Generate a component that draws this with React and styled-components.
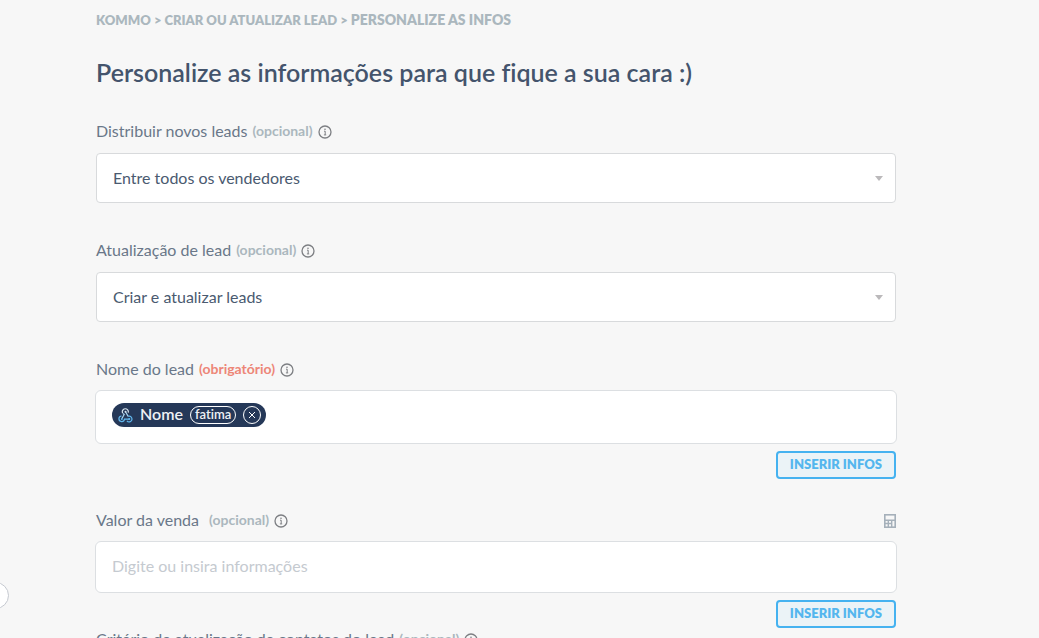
import React from "react";
import styled, { createGlobalStyle, css } from "styled-components";

const GlobalStyle = createGlobalStyle`
  *, *::before, *::after { box-sizing: border-box; }
  body {
    margin: 0;
    background: #f7f7f7;
    color: #42526b;
    font-family: Lato, "Open Sans", sans-serif;
    font-size: 16px;
    font-variant-ligatures: none;
  }
  button, input, select { font: inherit; color: inherit; }
`;

const Page = styled.main`
  position: relative;
  height: 100vh;
  overflow: hidden;
  padding: 10px 96px 0;
`;

const Content = styled.div`
  max-width: 800px;
`;

const Breadcrumb = styled.nav`
  color: #abb7be;
  font-size: 13px;
  font-weight: 800;
  line-height: 20px;
  text-transform: uppercase;
  white-space: nowrap;
`;

const Crumb = styled.a`
  color: inherit;
  text-decoration: none;
  font-size: ${(p) => (p.$current ? 14 : 13)}px;
`;

const Title = styled.h1`
  margin: 28px 0 36px;
  color: #44546c;
  font-size: 25px;
  font-weight: 600;
  line-height: 28px;
  white-space: nowrap;
`;

const Field = styled.section`
  margin-bottom: ${(p) => p.$space}px;
`;

const LabelRow = styled.div`
  display: flex;
  align-items: center;
  height: 20px;
  margin-bottom: 11px;
  white-space: nowrap;
`;

const Label = styled.label`
  padding-bottom: 2px;
  color: #6a7789;
  line-height: 20px;
`;

const Hint = styled.span`
  margin-left: ${(p) => (p.$wide ? 10 : 5)}px;
  padding-bottom: 2px;
  color: ${(p) => (p.$required ? "#ed8677" : "#abb7be")};
  font-size: 14px;
  font-weight: 700;
  line-height: 20px;
`;

const InfoButton = styled.button`
  display: flex;
  margin: 0 0 0 5px;
  padding: 0;
  border: 0;
  background: none;
  color: #7d7f83;
`;

const ToolButton = styled(InfoButton)`
  margin: 0 -1px 0 auto;
  color: #a5b0ba;
`;

const SelectBox = styled.div`
  position: relative;

  &::after {
    content: "";
    position: absolute;
    top: 23px;
    right: 13px;
    border: 4px solid transparent;
    border-top: 5px solid #bbb9bb;
    border-bottom: 0;
    pointer-events: none;
  }
`;

const surface = css`
  border: 1px solid #d8dadc;
  border-radius: 4px;
  background: #fff;
`;

const Select = styled.select`
  ${surface}
  display: block;
  width: 100%;
  height: 50px;
  padding: 0 32px 2px 16px;
  appearance: none;
  color: #4a5a70;
`;

const Editor = styled.div`
  ${surface}
  display: flex;
  align-items: flex-start;
  margin: -1px;
  padding: ${(p) => (p.$filled ? "12px 16px 16px" : "12px 16px 14px")};
  border-color: #dcdfe2;
  border-radius: 6px;
`;

const EditorInput = styled.input`
  flex: 1;
  min-width: 0;
  height: 24px;
  padding: 0 0 2px;
  border: 0;
  outline: 0;
  background: none;

  &::placeholder { color: #c5cad0; opacity: 1; }
`;

const Chip = styled.span`
  display: flex;
  align-items: center;
  height: 24px;
  padding: 0 5px 0 6px;
  border-radius: 12px;
  background: #253858;
  color: #eef1f5;
`;

const ChipName = styled.span`
  margin: 0 7px;
  font-size: 16px;
  font-weight: 600;
  line-height: 20px;
  padding-bottom: 2px;
`;

const ChipValue = styled.span`
  height: 18px;
  padding: 0 4px;
  border: 1px solid #fff;
  border-radius: 9px;
  font-size: 13px;
  font-weight: 600;
  line-height: 15px;
`;

const ChipRemove = styled.button`
  display: flex;
  align-items: center;
  justify-content: center;
  width: 18px;
  height: 18px;
  margin: 0 0 0 7px;
  padding: 0;
  border: 1px solid #fff;
  border-radius: 50%;
  background: none;
`;

const Actions = styled.div`
  display: flex;
  justify-content: flex-end;
  margin-top: 8px;
`;

const InsertButton = styled.button`
  height: 28px;
  padding: 0 12px 2px;
  border: 2px solid #45b2f0;
  border-radius: 4px;
  background: #ebf3f7;
  color: #54b6ee;
  font-size: 13px;
  font-weight: 800;
  line-height: 20px;
`;

const DrawerHandle = styled.button`
  position: absolute;
  top: 582px;
  left: -18px;
  width: 27px;
  height: 27px;
  padding: 0;
  border: 1px solid #c5c9d0;
  border-radius: 50%;
  background: #fff;
`;

const InfoIcon = () => (
  <svg width="14" height="14" viewBox="0 0 14 14" fill="none" stroke="currentColor">
    <circle cx="7" cy="7" r="6" strokeWidth="1.3" />
    <path d="M6 6.2h1.2v3.6M5.9 9.9h2.3" strokeWidth="1" />
    <circle cx="7" cy="4.2" r=".8" fill="currentColor" stroke="none" />
  </svg>
);

const CalculatorIcon = () => (
  <svg width="14" height="14" viewBox="0 0 14 14" fill="none" stroke="currentColor">
    <rect x="1.8" y=".8" width="10.4" height="12.4" strokeWidth="1.6" />
    <path d="M2 6.2h10M2 9.5h6.5M5.3 6.5v6.5M8.7 6.5v6.5" strokeWidth="1.4" />
  </svg>
);

const WebhookIcon = () => (
  <svg width="15" height="15" viewBox="0 0 15 15" fill="none" strokeWidth="1.2">
    <path d="M4.7 5.2A3 3 0 1 1 10.2 4.6" stroke="#d7e4ee" />
    <path d="M5 5.5 6.2 6.5 4 10.4M7.5 3.7 10.2 8.4" stroke="#a9d3ee" />
    <path d="M3.5 8A2.8 2.8 0 1 0 6.5 11.2H11" stroke="#62b9ef" />
    <path d="M10.2 8.4A2.8 2.8 0 1 1 8.9 12.8" stroke="#62b9ef" />
    <g fill="#62b9ef">
      <circle cx="7.5" cy="3.7" r="1" fill="#d7e4ee" />
      <circle cx="3.8" cy="11" r="1" />
      <circle cx="11.3" cy="11" r="1" />
    </g>
  </svg>
);

const CloseIcon = () => (
  <svg width="8" height="8" viewBox="0 0 8 8" stroke="#fff">
    <path d="M1 1l6 6M7 1L1 7" />
  </svg>
);

function FieldLabel({ id, text, required, wide, children }) {
  return (
    <LabelRow>
      <Label htmlFor={id}>{text}</Label>
      <Hint $required={required} $wide={wide}>{required ? "(obrigatório)" : "(opcional)"}</Hint>
      <InfoButton type="button" aria-label="Ajuda"><InfoIcon /></InfoButton>
      {children}
    </LabelRow>
  );
}

function SelectField({ id, text, value, space = 38 }) {
  return (
    <Field $space={space}>
      <FieldLabel id={id} text={text} />
      <SelectBox>
        <Select id={id} defaultValue={value}>
          <option>{value}</option>
        </Select>
      </SelectBox>
    </Field>
  );
}

function InsertAction() {
  return (
    <Actions>
      <InsertButton type="button">INSERIR INFOS</InsertButton>
    </Actions>
  );
}

export default function App() {
  return (
    <>
      <GlobalStyle />
      <Page>
        <Content>
          <Breadcrumb>
            <Crumb href="#kommo">Kommo</Crumb> &gt; <Crumb href="#lead">Criar ou atualizar lead</Crumb> &gt;{" "}
            <Crumb href="#infos" $current>Personalize as infos</Crumb>
          </Breadcrumb>
          <Title>Personalize as informações para que fique a sua cara :)</Title>

          <SelectField id="distribuir" text="Distribuir novos leads" value="Entre todos os vendedores" />
          <SelectField id="atualizacao" text="Atualização de lead" value="Criar e atualizar leads" />

          <Field $space={32}>
            <FieldLabel id="nome" text="Nome do lead" required />
            <Editor $filled>
              <Chip>
                <WebhookIcon />
                <ChipName>Nome</ChipName>
                <ChipValue>fatima</ChipValue>
                <ChipRemove type="button" aria-label="Remover"><CloseIcon /></ChipRemove>
              </Chip>
              <EditorInput id="nome" />
            </Editor>
            <InsertAction />
          </Field>

          <Field $space={2}>
            <FieldLabel id="valor" text="Valor da venda" wide>
              <ToolButton type="button" aria-label="Calculadora"><CalculatorIcon /></ToolButton>
            </FieldLabel>
            <Editor>
              <EditorInput id="valor" placeholder="Digite ou insira informações" />
            </Editor>
            <InsertAction />
          </Field>

          <SelectField id="criterio" text="Critério de atualização de contatos do lead" value="Criar e atualizar contatos" />
        </Content>
        <DrawerHandle type="button" aria-label="Abrir painel" />
      </Page>
    </>
  );
}
